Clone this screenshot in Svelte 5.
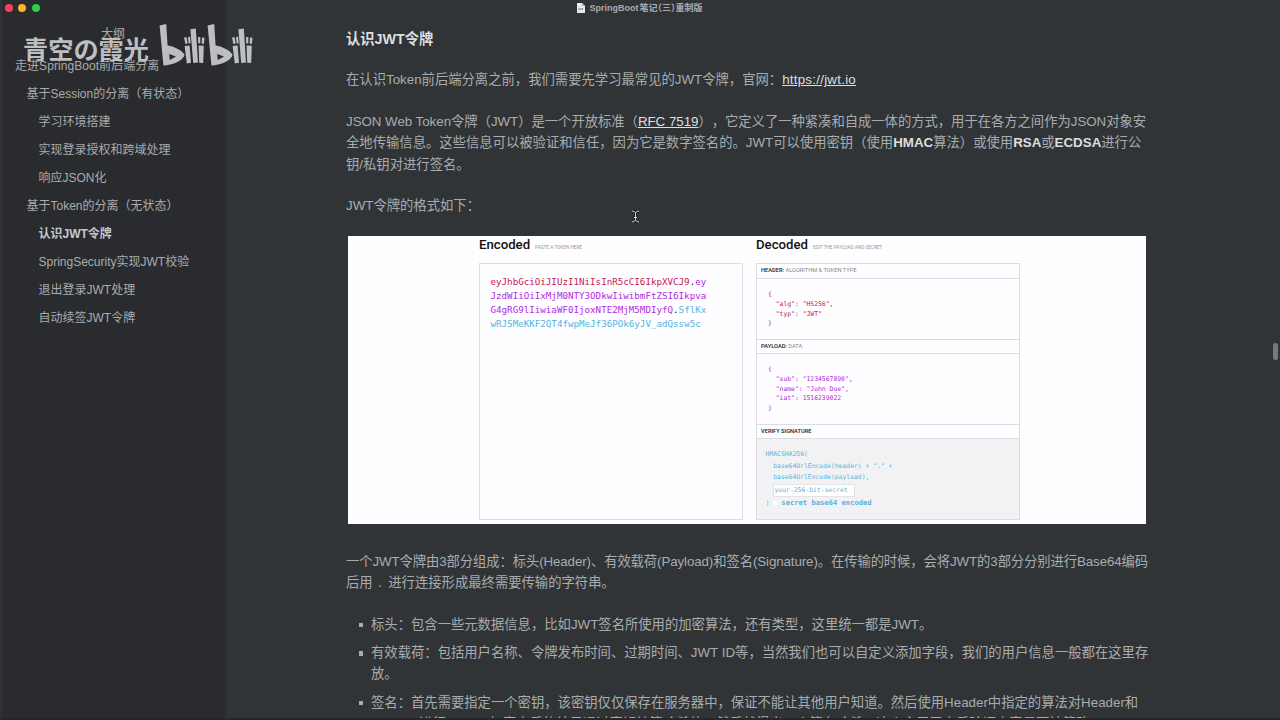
<script lang="ts">
    const outline = [
        { title: '走进SpringBoot前后端分离', level: 1 },
        { title: '基于Session的分离（有状态）', level: 2 },
        { title: '学习环境搭建', level: 3 },
        { title: '实现登录授权和跨域处理', level: 3 },
        { title: '响应JSON化', level: 3 },
        { title: '基于Token的分离（无状态）', level: 2 },
        { title: '认识JWT令牌', level: 3, active: true },
        { title: 'SpringSecurity实现JWT校验', level: 3 },
        { title: '退出登录JWT处理', level: 3 },
        { title: '自动续签JWT令牌', level: 3 }
    ];

    const header = `{
  "alg": "HS256",
  "typ": "JWT"
}`;

    const payload = `{
  "sub": "1234567890",
  "name": "John Doe",
  "iat": 1516239022
}`;

    const parts = [
        ['标头：包含一些元数据信息，比如JWT签名所使用的加密算法，还有类型，这里统一都是JWT。'],
        ['有效载荷：包括用户名称、令牌发布时间、过期时间、JWT ID等，当然我们也可以自定义添加字段，我们的用户信息一般都在这里存', '放。'],
        ['签名：首先需要指定一个密钥，该密钥仅仅保存在服务器中，保证不能让其他用户知道。然后使用Header中指定的算法对Header和', 'Payload进行base64加密之后的结果通过密钥计算哈希值，然后就得出一个签名哈希。这个会用于之后验证内容是否被篡改。']
    ];
</script>

<div class="window">
    <aside class="sidebar">
        <div class="lights">
            <span class="light close"></span>
            <span class="light minimize"></span>
            <span class="light zoom"></span>
        </div>
        <h3 class="outline-title">大纲</h3>
        <nav>
            {#each outline as item}
                <div class="item level-{item.level}" class:active={item.active}>{item.title}</div>
            {/each}
        </nav>
    </aside>

    <main class="content">
        <h2>认识JWT令牌</h2>
        <p>在认识Token前后端分离之前，我们需要先学习最常见的JWT令牌，官网：<span class="link url">https://jwt.io</span></p>
        <p>
            <span class="line snug">JSON Web Token令牌（JWT）是一个开放标准（<span class="link">RFC 7519</span>），它定义了一种紧凑和自成一体的方式，用于在各方之间作为JSON对象安</span>
            <span class="line">全地传输信息。这些信息可以被验证和信任，因为它是数字签名的。JWT可以使用密钥（使用<b>HMAC</b>算法）或使用<b>RSA</b>或<b>ECDSA</b>进行公</span>
            <span class="line">钥/私钥对进行签名。</span>
        </p>
        <p>JWT令牌的格式如下：</p>

        <figure class="jwt">
            <div class="half">
                <div class="caption"><strong>Encoded</strong><small>PASTE A TOKEN HERE</small></div>
                <div class="box token">
                    <div><span class="red">eyJhbGciOiJIUzI1NiIsInR5cCI6IkpXVCJ9</span>.<span class="purple">ey</span></div>
                    <div class="purple">JzdWIiOiIxMjM0NTY3ODkwIiwibmFtZSI6Ikpva</div>
                    <div><span class="purple">G4gRG9lIiwiaWF0IjoxNTE2MjM5MDIyfQ</span>.<span class="blue">SflKx</span></div>
                    <div class="blue">wRJSMeKKF2QT4fwpMeJf36POk6yJV_adQssw5c</div>
                </div>
            </div>
            <div class="half">
                <div class="caption"><strong>Decoded</strong><small>EDIT THE PAYLOAD AND SECRET</small></div>
                <div class="box">
                    <div class="label"><b>HEADER:</b> ALGORITHM &amp; TOKEN TYPE</div>
                    <pre class="code red head">{header}</pre>
                    <div class="label ruled"><b>PAYLOAD:</b> DATA</div>
                    <pre class="code purple body">{payload}</pre>
                    <div class="label ruled"><b>VERIFY SIGNATURE</b></div>
                    <div class="signature blue">
                        <div>HMACSHA256(</div>
                        <div class="arg">base64UrlEncode(header) + "." +</div>
                        <div class="arg">base64UrlEncode(payload),</div>
                        <div class="secret">your-256-bit-secret</div>
                        <div class="last">)<i class="check"></i><b>secret base64 encoded</b></div>
                    </div>
                </div>
            </div>
        </figure>

        <p class="after-figure">
            <span class="line tight">一个JWT令牌由3部分组成：标头(Header)、有效载荷(Payload)和签名(Signature)。在传输的时候，会将JWT的3部分分别进行Base64编码</span>
            <span class="line">后用<code>.</code>进行连接形成最终需要传输的字符串。</span>
        </p>
        <ul>
            {#each parts as lines}
                <li>
                    {#each lines as line}
                        <span class="line">{line}</span>
                    {/each}
                </li>
            {/each}
        </ul>
    </main>

    <header class="titlebar">
        <svg width="8" height="10" viewBox="0 0 8 10">
            <path d="M0 0h5l3 3v7H0z" fill="#e6e8e9" />
            <path d="M5 0v3h3" fill="#aeb2b4" />
            <path d="M1.5 6h5" stroke="#777b7e" stroke-width="1.3" stroke-dasharray="1.2 .5" />
        </svg>
        <span class="file-name"><span>SpringBoot</span><span>笔记（三）重制版</span></span>
    </header>

    <div class="watermark">
        <span class="author">青空の霞光</span>
        <svg class="logo" width="96" height="44" viewBox="0 0 96 44" aria-label="bilibili">
            {#each [0, 48] as x}
                <g transform="translate({x} 0)" fill="#c9cacd">
                    <path fill-rule="evenodd" d="M-0.4 1.6 L6.2 0 L7.6 21.5 C15 22.5 23 27 24.6 31 C22.5 37 12 41.2 3.4 41.6 Z M9.2 30 L9.8 36 L16 32.4 Z" />
                    <path d="M24.6 22 L29.6 21.4 L31 38.8 L26.8 39.4 Z" />
                    <path d="M30.4 5.2 L35.8 4.6 L38 38.4 L33.2 39 Z" />
                    <path d="M38.6 21.4 L43.8 21.8 L43.2 39 L39.2 38.8 Z" />
                    <path d="M24 13.6 L26.6 13.2 L27.6 19.6 L25.4 20 Z M28 13 L30.2 12.8 L30.6 19.2 L28.6 19.4 Z M38 13 L40.4 13.2 L40.2 19.4 L38.2 19.2 Z M42 13.4 L44.6 13.8 L43.8 20 L41.6 19.6 Z" />
                </g>
            {/each}
        </svg>
    </div>

    <svg class="cursor" width="9" height="13" viewBox="0 0 9 13">
        <path d="M1 1 Q4 1 4.5 3 Q5 1 8 1 M4.5 3 V10 M1 12 Q4 12 4.5 10 Q5 12 8 12 M3 7.5h3" fill="none" stroke="#16191b" stroke-width="2.4" />
        <path d="M1 1 Q4 1 4.5 3 Q5 1 8 1 M4.5 3 V10 M1 12 Q4 12 4.5 10 Q5 12 8 12 M3 7.5h3" fill="none" stroke="#d2d4d5" stroke-width="1" />
    </svg>
    <div class="scroll-thumb"></div>
</div>

<style>
    :global(body) {
        background: #303437;
    }

    .window {
        position: relative;
        display: grid;
        grid-template-columns: 226px 1fr;
        width: 1280px;
        height: 720px;
        box-sizing: border-box;
        overflow: hidden;
        background: #303437;
        border-bottom: 2px solid #242629;
        color: #a9acae;
        font-family: 'Liberation Sans', 'Noto Sans CJK SC', sans-serif;
        font-size: 13.33px;
        line-height: 21.4px;
        text-spacing-trim: space-all;
    }

    .sidebar {
        background: #2a2b2f;
        font-size: 12px;
        box-shadow: inset 2px 0 #303236;
    }

    .lights {
        display: flex;
        gap: 5.3px;
        height: 12.6px;
        padding: 4.4px 0 0 5px;
    }

    .light {
        width: 8px;
        height: 8px;
        border-radius: 50%;
    }
    .close {
        background: #fc4057;
    }
    .minimize {
        background: #fdb32c;
    }
    .zoom {
        background: #2fd144;
    }

    .outline-title {
        margin: 3px 0 0 0;
        text-align: center;
        font-size: 12px;
        font-weight: 400;
        line-height: 28px;
        height: 32.4px;
    }

    .item {
        height: 28px;
        line-height: 28px;
        white-space: nowrap;
    }
    .level-1 {
        padding-left: 15px;
        letter-spacing: 0.06px;
    }
    .level-2 {
        padding-left: 26.5px;
    }
    .level-3 {
        padding-left: 38.5px;
    }
    .active {
        color: #c6c8ca;
        font-weight: 700;
    }

    .content {
        box-sizing: border-box;
        padding: 29px 0 0 120px;
        width: 1040px;
        height: 718px;
        overflow: hidden;
    }

    h2 {
        margin: 0 0 19px 0;
        color: #dcdedf;
        font-size: 14.3px;
        font-weight: 700;
        line-height: 21.4px;
    }

    p {
        margin: 0 0 20.1px 0;
        white-space: nowrap;
    }

    .line {
        display: block;
        white-space: nowrap;
    }
    .snug {
        letter-spacing: -0.03px;
    }
    .tight {
        letter-spacing: -0.1px;
    }

    .link {
        color: #dddfe0;
        text-decoration: underline;
    }
    .url {
        letter-spacing: 0.25px;
    }

    p b {
        color: #dcdedf;
    }

    .jwt {
        display: flex;
        gap: 13px;
        width: 798px;
        height: 288px;
        box-sizing: border-box;
        margin: -0.8px 0 0 2px;
        padding-left: 131px;
        background: #fefdff;
        color: #111;
        font-family: Roboto, sans-serif;
    }

    .half {
        width: 264px;
    }

    .caption {
        display: flex;
        align-items: baseline;
        gap: 5px;
        height: 27px;
        line-height: 17px;
    }
    .caption strong {
        font-size: 13.2px;
        font-weight: 500;
    }
    .caption small {
        color: #999;
        font-size: 4.7px;
    }

    .box {
        height: 257px;
        box-sizing: border-box;
        border: 1px solid #dedee2;
    }

    .token {
        padding: 11px 0 0 10.5px;
        font-family: 'DejaVu Sans Mono', monospace;
        font-size: 9.2px;
        line-height: 14px;
    }

    .red {
        color: #c2214f;
    }
    .purple {
        color: #b02be0;
    }
    .blue {
        color: #58b4de;
    }

    .label {
        height: 14px;
        padding-left: 4px;
        border-bottom: 1px solid #dedee2;
        color: #888;
        font-size: 5.7px;
        line-height: 13px;
    }
    .label b {
        color: #222;
        font-weight: 500;
    }
    .ruled {
        border-top: 1px solid #dedee2;
        height: 13px;
        line-height: 13px;
    }

    .code {
        margin: 0;
        padding: 11px 0 0 11px;
        box-sizing: border-box;
        font-family: 'DejaVu Sans Mono', monospace;
        font-size: 6.4px;
        line-height: 9.8px;
    }
    .head {
        height: 60px;
    }
    .body {
        height: 70px;
    }

    .signature {
        height: 80px;
        box-sizing: border-box;
        padding: 10px 0 0 8.5px;
        background: #f2f2f4;
        font-family: 'DejaVu Sans Mono', monospace;
        font-size: 6.4px;
        line-height: 11.7px;
    }
    .arg {
        padding-left: 7.7px;
    }
    .secret {
        width: 82px;
        height: 12.5px;
        box-sizing: border-box;
        margin-left: 7px;
        padding-left: 1px;
        border: 1px solid #e4e4e8;
        background: #fff;
        line-height: 11px;
    }
    .last {
        display: flex;
        align-items: center;
        line-height: 12px;
    }
    .last b {
        font-size: 7.15px;
    }
    .check {
        width: 4px;
        height: 4px;
        margin: 0 4.5px 0 3.5px;
        background: #fff;
    }

    .after-figure {
        margin: 26.8px 0 20.3px 0;
    }

    code {
        padding: 0 5px 0 4px;
        font-family: 'Liberation Mono', monospace;
        font-size: 11px;
        line-height: 1;
    }

    ul {
        margin: 0;
        padding: 0 0 0 25px;
        list-style: none;
    }

    li {
        position: relative;
        margin-bottom: 6.8px;
    }
    li::before {
        content: '';
        position: absolute;
        left: -12.5px;
        top: 9px;
        width: 4.5px;
        height: 4.5px;
        background: #a9acae;
    }

    .titlebar {
        position: absolute;
        top: 0;
        left: 0;
        right: 0;
        display: flex;
        justify-content: center;
        align-items: center;
        gap: 4px;
        height: 16px;
        font-size: 9px;
        font-weight: 700;
        line-height: 16px;
    }

    .file-name {
        display: flex;
        gap: 1px;
        font-feature-settings: 'halt';
    }

    .watermark {
        position: absolute;
        top: 24px;
        left: 23px;
        display: flex;
        gap: 11px;
        opacity: 0.93;
    }
    .author {
        color: #c9cacd;
        font-family: 'Noto Sans CJK SC', sans-serif;
        font-size: 25.2px;
        font-weight: 700;
        line-height: 48px;
    }

    .logo {
        overflow: visible;
    }

    .cursor {
        position: absolute;
        left: 631px;
        top: 210px;
    }

    .scroll-thumb {
        position: absolute;
        right: 2px;
        top: 343px;
        width: 5px;
        height: 17px;
        border-radius: 3px;
        background: #77797b;
    }
</style>
